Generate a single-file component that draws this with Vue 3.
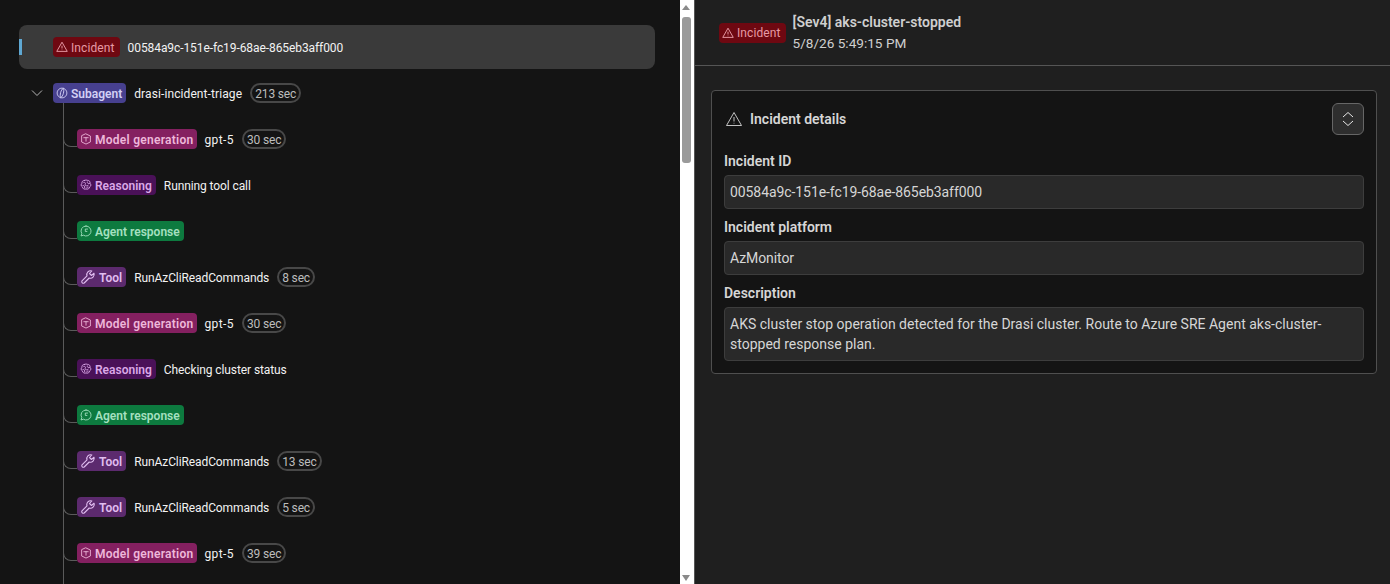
<template>
  <div class="page">
    <div class="trace-pane">
      <div class="root-row">
        <span class="badge incident">
          <svg class="ico" viewBox="0 0 16 16" fill="none" stroke="currentColor" stroke-width="1.1" stroke-linejoin="round"><path d="M8 2.500 14 13H2Z"/><path d="M8 6.500v3.200M8 11v.6"/></svg>
          Incident
        </span>
        <span class="name">00584a9c-151e-fc19-68ae-865eb3aff000</span>
      </div>

      <div class="sub-row">
        <svg class="chevron" viewBox="0 0 12 12" fill="none" stroke="currentColor" stroke-width="1"><path d="M1 3.500 6 8.500 11 3.500"/></svg>
        <span class="badge subagent">
          <svg class="ico" viewBox="0 0 16 16" fill="none" stroke="currentColor" stroke-width="1"><circle cx="8" cy="8" r="5.600"/><path d="M8 2.400C5.800 5 5.800 11 8 13.600M8 2.400c2.200 2.600 2.200 8.600 0 11.200" transform="rotate(15 8 8)"/></svg>
          Subagent
        </span>
        <span class="name">drasi-incident-triage</span>
        <span class="time">213 sec</span>
      </div>

      <div class="tree">
        <div v-for="(s, i) in steps" :key="i" class="step">
          <span class="badge" :class="kinds[s.kind].cls">
            <svg class="ico" viewBox="0 0 16 16" fill="none" stroke="currentColor" :stroke-width="s.kind === 'tool' ? 1.1 : 1" stroke-linejoin="round" stroke-linecap="round">
              <path v-for="(d, j) in kinds[s.kind].paths" :key="j" :d="d"/>
            </svg>
            {{ kinds[s.kind].label }}
          </span>
          <span v-if="s.name" class="name">{{ s.name }}</span>
          <span v-if="s.time" class="time">{{ s.time }}</span>
        </div>
      </div>
    </div>

    <div class="scrollbar">
      <span class="arrow up"></span>
      <span class="thumb"></span>
      <span class="arrow down"></span>
    </div>

    <div class="detail-pane">
      <header class="detail-head">
        <span class="badge incident">
          <svg class="ico" viewBox="0 0 16 16" fill="none" stroke="currentColor" stroke-width="1.1" stroke-linejoin="round"><path d="M8 2.500 14 13H2Z"/><path d="M8 6.500v3.200M8 11v.6"/></svg>
          Incident
        </span>
        <div>
          <div class="head-title">[Sev4] aks-cluster-stopped</div>
          <div class="head-date">5/8/26 5:49:15 PM</div>
        </div>
      </header>

      <section class="card">
        <div class="card-head">
          <svg class="warn" viewBox="0 0 16 16" fill="none" stroke="currentColor" stroke-width="0.9" stroke-linejoin="round"><path d="M8 1.500 15.500 14.500H.5Z"/><path d="M8 6v4.500M8 11.800v.7"/></svg>
          <span class="card-title">Incident details</span>
          <button class="toggle">
            <svg viewBox="0 0 12 16" width="12" height="16" fill="none" stroke="currentColor" stroke-width="1"><path d="M1 6 6 1.500 11 6M1 10 6 14.500 11 10"/></svg>
          </button>
        </div>
        <div class="field-label">Incident ID</div>
        <div class="field">00584a9c-151e-fc19-68ae-865eb3aff000</div>
        <div class="field-label">Incident platform</div>
        <div class="field">AzMonitor</div>
        <div class="field-label">Description</div>
        <div class="field multi">AKS cluster stop operation detected for the Drasi cluster. Route to Azure SRE Agent aks-cluster-stopped response plan.</div>
      </section>
    </div>
  </div>
</template>

<script setup>
const cube = [
  'M8 2.200 13 4.600V11.400L8 13.800 3 11.400V4.600Z',
  'M5.500 6.500H10.500M8 6.500V10.500'
]
const brain = [
  'M6 2.800C4.200 2.800 3 4.300 3.400 6 2 7 2.200 9.500 3.800 10 4 12 6 13.500 8 12.500 10 13.500 12.200 12 12.300 10 13.800 9.500 14 7 12.600 6 13 4.300 11.800 2.800 10 2.800 9 2.200 7 2.200 6 2.800Z',
  'M5.500 5C7 4.500 8 6 7 7.500S9.500 9.500 10.500 8.500M4.500 8.500C6 8.500 7 9.500 6.500 11.300M9.500 4.500C9 6 10.500 6.800 12 6.300M9 11.500C8.800 10.500 9.500 10 10.500 10.300'
]
const chat = [
  'M8 2.300A5.700 5.700 0 1 1 5 12.800L2.300 13.700 3.200 11A5.700 5.700 0 0 1 8 2.300Z',
  'M9.800 5.800H7.200V8.500H9'
]
const wrench = [
  'M14 4.200 11.500 6.500 9.500 4.500 11.800 2A3.800 3.800 0 0 0 7 6.800L2 11.800A1.600 1.600 0 0 0 4.200 14L9.200 9A3.800 3.800 0 0 0 14 4.200Z'
]

const kinds = {
  model: { label: 'Model generation', cls: 'model', paths: cube },
  reason: { label: 'Reasoning', cls: 'reasoning', paths: brain },
  agent: { label: 'Agent response', cls: 'agent', paths: chat },
  tool: { label: 'Tool', cls: 'tool', paths: wrench }
}

const steps = [
  { kind: 'model', name: 'gpt-5', time: '30 sec' },
  { kind: 'reason', name: 'Running tool call' },
  { kind: 'agent' },
  { kind: 'tool', name: 'RunAzCliReadCommands', time: '8 sec' },
  { kind: 'model', name: 'gpt-5', time: '30 sec' },
  { kind: 'reason', name: 'Checking cluster status' },
  { kind: 'agent' },
  { kind: 'tool', name: 'RunAzCliReadCommands', time: '13 sec' },
  { kind: 'tool', name: 'RunAzCliReadCommands', time: '5 sec' },
  { kind: 'model', name: 'gpt-5', time: '39 sec' }
]
</script>

<style>
html, body { margin: 0; background: #141414; overflow: hidden; }
</style>

<style scoped>
.page {
  display: flex;
  width: 1390px;
  height: 584px;
  overflow: hidden;
  font-family: Roboto, "Liberation Sans", sans-serif;
  font-size: 14px;
  color: #d6d6d6;
}

.trace-pane {
  width: 680px;
  flex: none;
  padding: 25px 25px 0 19px;
  box-sizing: border-box;
  background: #141414;
  overflow: hidden;
}
.root-row {
  position: relative;
  display: flex;
  align-items: center;
  height: 44px;
  padding-left: 34px;
  border-radius: 8px;
  background: #3a3a3a;
}
.root-row::before {
  content: "";
  position: absolute;
  left: 0;
  top: 14px;
  width: 3px;
  height: 16px;
  background: #5fa8d3;
}
.root-row .name { letter-spacing: -0.08px; }
.sub-row {
  display: flex;
  align-items: center;
  height: 20px;
  margin-top: 14px;
  padding-left: 34px;
  position: relative;
}
.sub-row .name { letter-spacing: 0.1px; }
.chevron {
  position: absolute;
  left: 12px;
  top: 4px;
  width: 12px;
  height: 12px;
  color: #b5b5b5;
}
.tree {
  position: relative;
  margin-left: 44px;
  padding-left: 13px;
  height: 520px;
  border-left: 1px solid #5a5a5a;
  box-sizing: border-box;
  padding-top: 26px;
  display: flex;
  flex-direction: column;
  gap: 26px;
}
.step {
  position: relative;
  display: flex;
  align-items: center;
  height: 20px;
}
.step .name { letter-spacing: -0.1px; }
.step .model + .name { letter-spacing: 0.4px; margin-left: 7px; }
.step::before {
  content: "";
  position: absolute;
  left: -14px;
  top: 0;
  width: 14px;
  height: 18px;
  border-left: 1px solid #5a5a5a;
  border-bottom: 1px solid #5a5a5a;
  border-bottom-left-radius: 8px;
  box-sizing: border-box;
}

.badge {
  display: inline-flex;
  align-items: center;
  gap: 2px;
  height: 20px;
  padding: 1px 4px 0 2px;
  box-sizing: border-box;
  border-radius: 4px;
  font-size: 12px;
  font-weight: 600;
  white-space: nowrap;
  flex: none;
}
.ico { width: 14px; height: 14px; flex: none; margin-top: -1px; }
.incident { background: #6e0811; color: #e79aa5; font-weight: 400; letter-spacing: 0.1px; padding-right: 5px; }
.subagent { background: #47408f; color: #d3d0f5; }
.model { background: #842060; color: #eeb8da; letter-spacing: 0.26px; }
.reasoning { background: #4a1158; color: #dba8e8; }
.agent { background: #0d7a3f; color: #a5e0c0; }
.tool { background: #5c2a6e; color: #e0bdf0; gap: 3px; padding-left: 3px; }
.tool .ico { width: 16px; height: 16px; }

.name {
  margin-left: 8px;
  padding-top: 1px;
  font-size: 12px;
  color: #f2f2f2;
  white-space: nowrap;
}
.time {
  margin-left: 8px;
  height: 20px;
  padding: 0 3px;
  box-sizing: border-box;
  border: 2px solid #484848;
  border-radius: 10px;
  font-size: 12px;
  letter-spacing: -0.15px;
  line-height: 18px;
  color: #bdbdbd;
  white-space: nowrap;
}

.scrollbar {
  position: relative;
  width: 14px;
  flex: none;
  background: #fff;
}
.thumb {
  position: absolute;
  left: 2px;
  top: 17px;
  width: 9px;
  height: 146px;
  border-radius: 3px;
  background: #9a9a9a;
}
.arrow {
  position: absolute;
  left: 2px;
  width: 0;
  height: 0;
  border-left: 4.500px solid transparent;
  border-right: 4.500px solid transparent;
}
.arrow.up { top: 5px; border-bottom: 5px solid #8a8a8a; }
.arrow.down { bottom: 3px; border-top: 6px solid #8a8a8a; }

.detail-pane {
  flex: 1;
  min-width: 0;
  border-left: 1px solid #555;
  background: #1f1f1f;
}
.detail-head {
  display: flex;
  align-items: center;
  gap: 7px;
  height: 66px;
  padding: 0 24px;
  box-sizing: border-box;
  border-bottom: 1px solid #555;
}
.head-title { font-size: 14px; font-weight: 600; line-height: 22px; color: #cfcfcf; }
.head-date { font-size: 13.600px; line-height: 21px; color: #cfcfcf; }

.card {
  margin: 24px 13px 0 16px;
  padding: 0 12px 12px;
  border: 1px solid #4f4f4f;
  border-radius: 4px;
  background: #141414;
}
.card-head {
  display: flex;
  align-items: center;
  gap: 8px;
  height: 56px;
  margin-bottom: 4px;
  padding-left: 2px;
}
.warn { width: 16px; height: 16px; color: #d6d6d6; }
.card-title { flex: 1; font-size: 14px; font-weight: 600; color: #d6d6d6; }
.toggle {
  display: flex;
  align-items: center;
  justify-content: center;
  width: 32px;
  height: 32px;
  padding: 0;
  border: 1px solid #666;
  border-radius: 6px;
  background: #2e2e2e;
  color: #e6e6e6;
}
.field-label {
  height: 20px;
  margin-bottom: 4px;
  font-size: 14px;
  font-weight: 600;
  line-height: 20px;
  color: #d6d6d6;
}
.field {
  min-height: 34px;
  padding: 6px 5px;
  box-sizing: border-box;
  margin-bottom: 8px;
  border: 1px solid #3d3d3d;
  border-radius: 4px;
  background: #292929;
  font-size: 14px;
  letter-spacing: -0.08px;
  line-height: 20px;
  color: #d6d6d6;
}
.field.multi { margin-bottom: 0; letter-spacing: 0; }
</style>
